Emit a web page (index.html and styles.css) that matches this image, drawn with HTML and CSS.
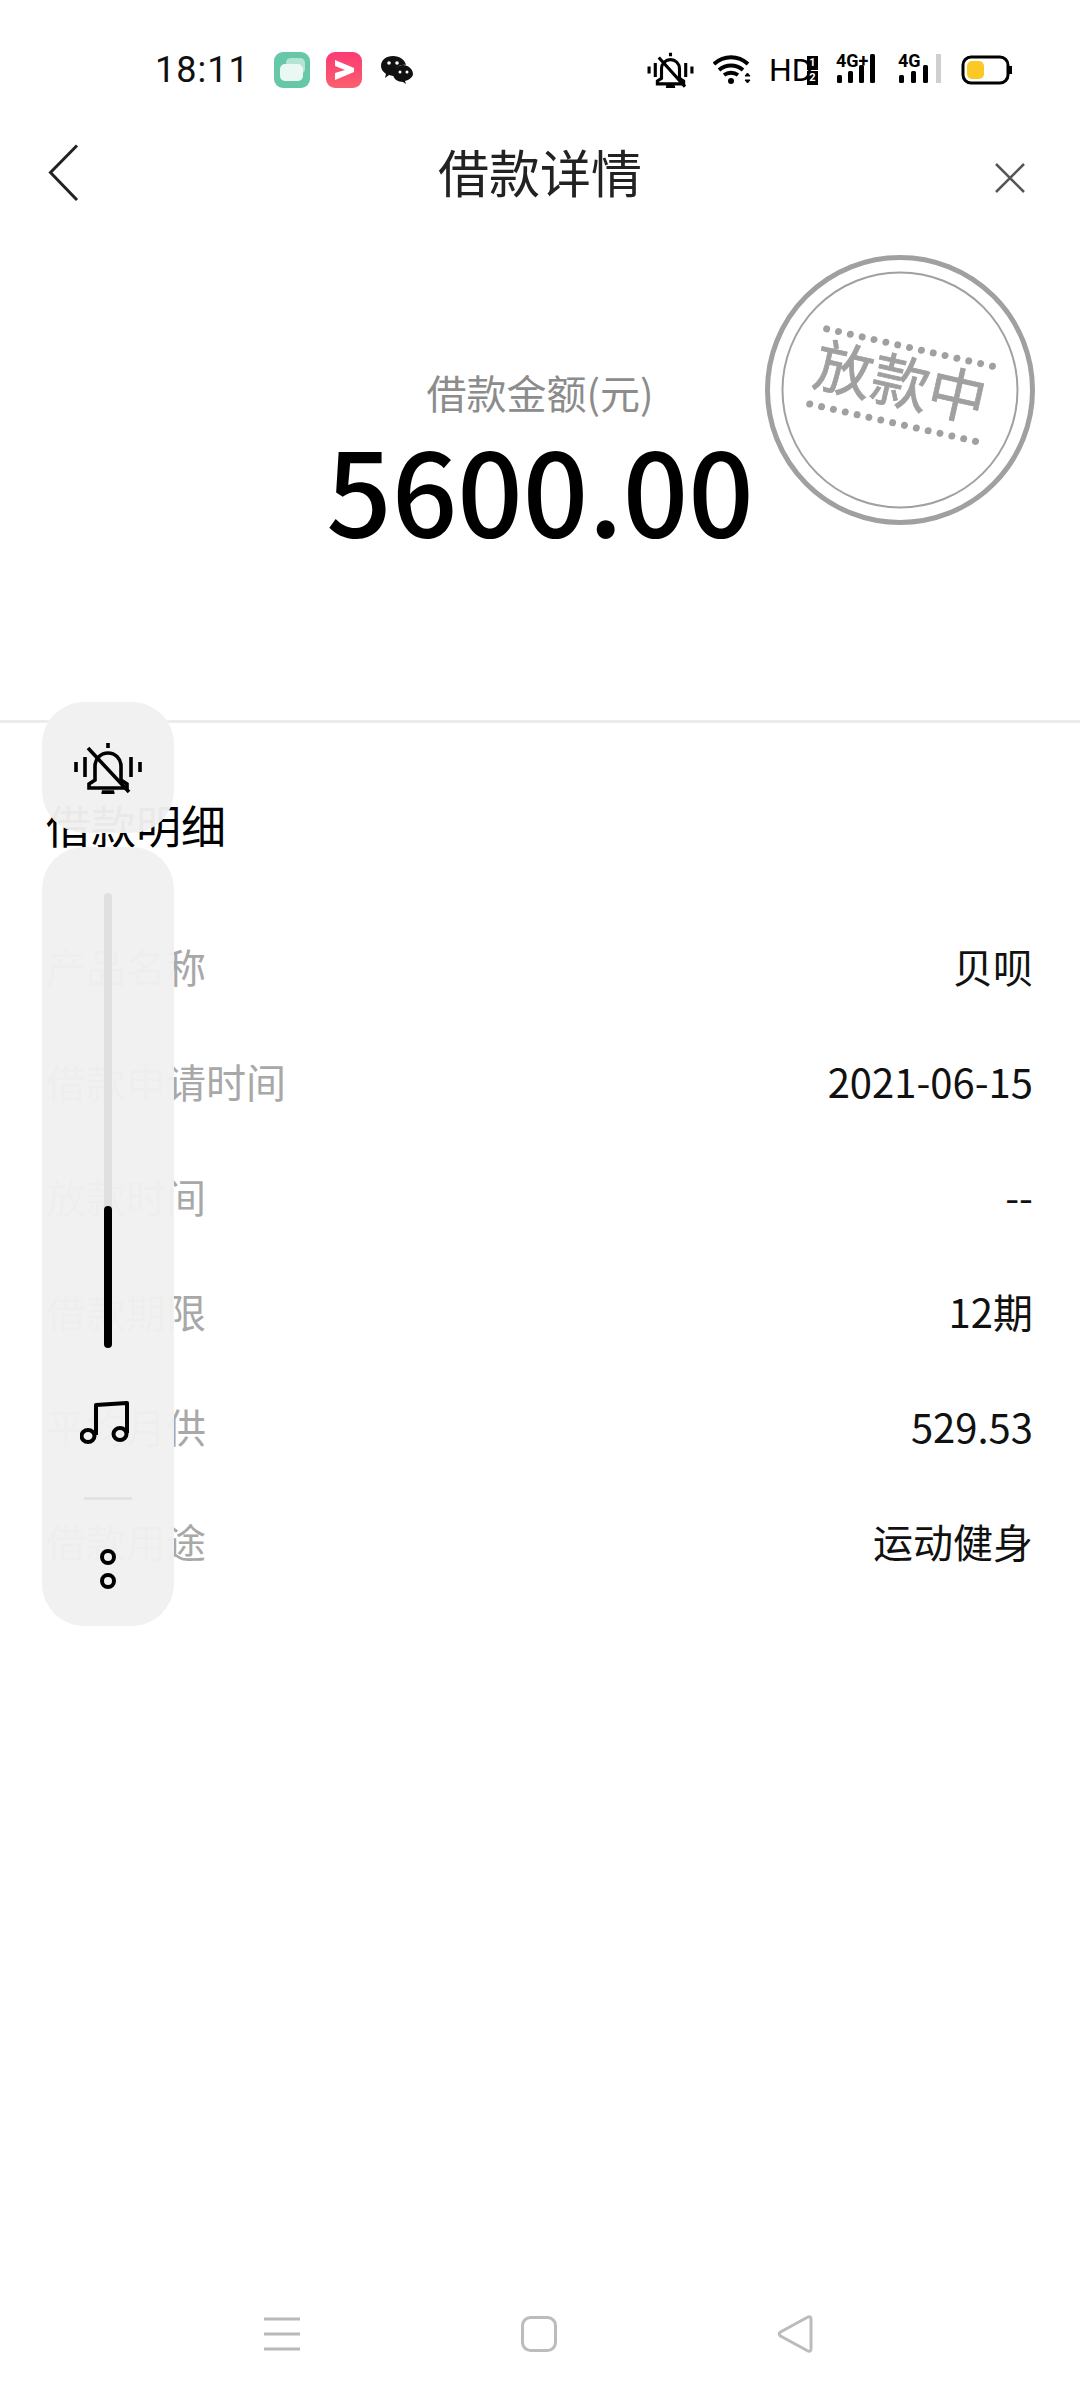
FILE: index.html
```html
<!DOCTYPE html>
<html lang="zh-CN">
<head>
    <meta charset="utf-8">
    <title>借款详情</title>
    <link rel="stylesheet" href="styles.css">
</head>
<body>
<div class="page">
    <div class="status">
        <span class="time">18:11</span>
        <svg class="app-icon" width="36" height="36" viewBox="0 0 36 36">
            <rect width="36" height="36" rx="9" fill="#66c8a9"/>
            <path d="M12 10c0-2 2-4 5-4h9c3 0 5 2 5 5v6c0 2-1 4-3 4V13H12z" fill="#b4e4d3"/>
            <rect x="6" y="12" width="23" height="17" rx="5" fill="#eaf8f3"/>
        </svg>
        <svg class="app-icon" width="36" height="36" viewBox="0 0 36 36">
            <defs><linearGradient id="pink" x1="0" y1="0" x2="0" y2="1"><stop offset="0" stop-color="#fb3a74"/><stop offset="1" stop-color="#fb5f6e"/></linearGradient></defs>
            <rect width="36" height="36" rx="9" fill="url(#pink)"/>
            <path d="M9 8l19 8v4L9 28v-7l10-3-10-4z" fill="#fff"/>
        </svg>
        <svg class="wechat" width="34" height="30" viewBox="0 0 34 30">
            <path d="M13 1C6 1 1 5 1 11c0 3 2 6 5 8l-1 4 4-3c1 0 3 1 4 1h1c-1-7 5-12 12-11C25 5 20 1 13 1z" fill="#111"/>
            <path d="M23 10c-5 0-10 4-10 9s5 8 10 8l3 2-1-3c4-1 8-4 8-7 0-5-5-9-10-9z" fill="#111"/>
            <circle cx="9" cy="8" r="1.8" fill="#fff"/><circle cx="17" cy="8" r="1.8" fill="#fff"/>
            <circle cx="20" cy="17" r="1.5" fill="#fff"/><circle cx="27" cy="17" r="1.5" fill="#fff"/>
        </svg>
        <div class="status-right">
            <svg class="s-bell" width="47" height="36" viewBox="0 0 68 52">
                <path d="M3 21v10M12 16v20M56 16v20M65 21v10" stroke="#000" stroke-width="4.500" fill="none"/>
                <path d="M34 1v5M21 38v-14a13 13 0 0 1 26 0v14l6 4v4H15v-4z" stroke="#000" stroke-width="4.500" fill="none"/>
                <path d="M28 50h12l-6 2.500zM17 8l38 42" stroke="#000" stroke-width="4.500" fill="none"/>
            </svg>
            <svg class="s-wifi" width="38" height="30" viewBox="0 0 38 30">
                <path d="M1 9c10-9 24-9 34 0M6 15c7-6 17-6 24 0M11 20c4-3 10-3 14 0" stroke="#000" stroke-width="3.800" fill="none"/>
                <circle cx="18" cy="26" r="3" fill="#000"/>
                <path d="M32 21l2.500-3 2.500 3zM32 25l2.500 3 2.500-3z" fill="#000" stroke="#000"/>
            </svg>
            <span class="hd">HD</span>
            <div class="hd-sim"><span class="sim-a">1</span><span class="sim-b">2</span></div>
            <svg class="s-sig" width="44" height="40" viewBox="0 0 44 40">
                <text x="0" y="17" class="sig-text">4G+</text>
                <rect x="1" y="25" width="5" height="8" rx="1.500"/><rect x="12" y="21" width="5" height="12" rx="1.500"/><rect x="23" y="15" width="5" height="18" rx="1.500"/><rect x="34" y="4" width="5" height="29" rx="1.500"/>
            </svg>
            <svg class="s-sig s-sig-last" width="44" height="40" viewBox="0 0 44 40">
                <text x="0" y="17" class="sig-text">4G</text>
                <rect x="1" y="25" width="5" height="8" rx="1.500"/><rect x="13" y="21" width="5" height="12" rx="1.500"/><rect x="25" y="15" width="5" height="18" rx="1.500"/><rect x="38" y="4" width="5" height="29" fill="#cfcfcf"/>
            </svg>
            <svg class="s-batt" width="51" height="30" viewBox="0 0 51 30">
                <rect x="2" y="2" width="45" height="26" rx="8" fill="none" stroke="#000" stroke-width="3"/>
                <rect x="6" y="6" width="17" height="18" rx="5" fill="#fbc926"/>
                <path d="M49.500 11v8" stroke="#000" stroke-width="3"/>
            </svg>
        </div>
    </div>

    <div class="topbar">
        <svg class="tb-back" width="32" height="58" viewBox="0 0 32 58"><path d="M29 1.500L2.500 28.500 29 56" fill="none" stroke="#222" stroke-width="3"/></svg>
        <h1 class="title">借款详情</h1>
        <svg class="tb-close" width="32" height="32" viewBox="0 0 32 32"><path d="M2 2l28 28M30 2L2 30" fill="none" stroke="#555" stroke-width="2.500"/></svg>
    </div>

    <div class="summary">
        <p class="amount-label">借款金额(元)</p>
        <p class="amount">5600.00</p>
        <svg class="stamp" width="272" height="272" viewBox="0 0 272 272">
            <circle cx="136" cy="136" r="132.500" fill="none" stroke="#a0a0a0" stroke-width="5"/>
            <circle cx="136" cy="136" r="117.500" fill="none" stroke="#a0a0a0" stroke-width="2"/>
            <g transform="rotate(12.7 136 136)">
                <text x="135" y="150" text-anchor="middle" class="stamp-text">放款中</text>
                <path d="M51 92.500H221M51 169.500H221" fill="none" stroke="#a0a0a0" stroke-width="7" stroke-linecap="round" stroke-dasharray="0 12.14"/>
            </g>
        </svg>
    </div>

    <div class="detail">
        <h2 class="detail-title">借款明细</h2>
        <div class="row"><span class="row-label">产品名称</span><span class="row-value">贝呗</span></div>
        <div class="row"><span class="row-label">借款申请时间</span><span class="row-value">2021-06-15</span></div>
        <div class="row"><span class="row-label">放款时间</span><span class="row-value">--</span></div>
        <div class="row"><span class="row-label">借款期限</span><span class="row-value">12期</span></div>
        <div class="row"><span class="row-label">平均月供</span><span class="row-value">529.53</span></div>
        <div class="row"><span class="row-label">借款用途</span><span class="row-value">运动健身</span></div>
    </div>

    <div class="navbar">
        <svg width="36" height="34" viewBox="0 0 36 34"><path d="M0 2h36M0 17h36M0 32h36" stroke="#b9b9b9" stroke-width="3"/></svg>
        <svg width="36" height="36" viewBox="0 0 36 36"><rect x="1.500" y="1.500" width="33" height="33" rx="8" fill="none" stroke="#bcbcbc" stroke-width="3"/></svg>
        <svg width="37" height="40" viewBox="0 0 37 40"><path d="M30 3.500L3.500 18Q1 20 3.500 22L30 36.500Q34 38.500 34 35V5Q34 1.500 30 3.500z" fill="none" stroke="#bcbcbc" stroke-width="3"/></svg>
    </div>

    <div class="vol-mute">
        <svg width="68" height="52" viewBox="0 0 68 52">
            <path d="M2 20v10M11 15v20M57 15v20M66 20v10" stroke="#000" stroke-width="3.600" fill="none"/>
            <path d="M34 1v5M21 38v-14a13 13 0 0 1 26 0v14l6 4v4H15v-4z" stroke="#000" stroke-width="3.600" fill="none"/>
            <path d="M28 50h12l-6 2.500zM14 6l41 44" stroke="#000" stroke-width="3.600" fill="none"/>
        </svg>
    </div>
    <div class="vol-panel">
        <div class="slider"><div class="slider-fill"></div></div>
        <svg class="music" width="50" height="46" viewBox="0 0 50 46">
            <path d="M16 36V6l31-2v30" fill="none" stroke="#000" stroke-width="4" stroke-linejoin="round"/>
            <ellipse cx="8" cy="37" rx="6.500" ry="6" fill="none" stroke="#000" stroke-width="4"/>
            <ellipse cx="40" cy="35" rx="6.500" ry="6" fill="none" stroke="#000" stroke-width="4"/>
        </svg>
        <div class="vol-line"></div>
        <div class="vol-dot"></div>
        <div class="vol-dot"></div>
    </div>
</div>
</body>
</html>
```

FILE: styles.css
```css
*{
    box-sizing: border-box;
}
body{
    margin: 0;
    background-color: #fff;
    color: #000;
    font-family: "Noto Sans CJK SC", "Noto Sans", sans-serif;
}
p, h1, h2{
    margin: 0;
    font-weight: 400;
}
.page{
    position: relative;
    width: 1080px;
    height: 2400px;
    display: flex;
    flex-direction: column;
    overflow: hidden;
}

/* status bar */
.status{
    height: 138px;
    padding: 52px 68px 0 155px;
    display: flex;
    align-items: flex-start;
}
.time{
    font-family: Roboto, sans-serif;
    font-size: 36px;
    line-height: 36px;
    letter-spacing: 1px;
    width: 119px;
    color: #111;
}
.app-icon{
    margin-right: 16px;
}
.wechat{
    margin: 3px 0 0 2px;
}
.status-right{
    margin-left: auto;
    display: flex;
    align-items: center;
    height: 36px;
}
.s-bell{
    margin-right: 19px;
}
.s-wifi{
    margin-right: 18px;
}
.hd{
    width: 38px;
    font-family: "Liberation Sans Narrow", Roboto, sans-serif;
    font-size: 32px;
    line-height: 36px;
}
.hd-sim{
    width: 11px;
    margin-right: 18px;
    display: flex;
    flex-direction: column;
    gap: 1px;
}
.sim-a, .sim-b{
    height: 14px;
    font: 700 11px/14px Roboto, sans-serif;
    text-align: center;
    color: #fff;
    background-color: #000;
}
.s-sig{
    margin-right: 18px;
}
.s-sig-last{
    margin-right: 19px;
}
.sig-text{
    font: 700 18px "Liberation Sans Narrow", Roboto, sans-serif;
}

/* title */
.topbar{
    height: 68px;
    padding: 0 54px 0 48px;
    display: grid;
    grid-template-columns: 1fr auto 1fr;
    align-items: center;
}
.tb-close{
    justify-self: end;
    margin-top: 11px;
}
.tb-back{
    margin-top: 2px;
}
.title{
    font-size: 51px;
    line-height: 64px;
    color: #222;
    margin: 0 0 2px 6px;
}

/* amount */
.summary{
    position: relative;
    height: 517px;
    border-bottom: 3px solid #ececec;
    padding-top: 160px;
    text-align: center;
}
.amount-label{
    font-size: 40px;
    line-height: 52px;
    color: #8c8c8c;
}
.amount{
    font-size: 115px;
    font-weight: 500;
    line-height: 130px;
    margin-top: 4px;
}
.stamp{
    position: absolute;
    left: 764px;
    top: 48px;
}
.stamp-text{
    font-size: 58px;
    fill: #a0a0a0;
    stroke: #a0a0a0;
    stroke-width: .8px;
    font-family: "Noto Sans CJK SC", sans-serif;
}

/* detail list */
.detail{
    padding: 72px 47px 0 46px;
}
.detail-title{
    font-size: 45px;
    line-height: 60px;
    margin-bottom: 53px;
}
.row{
    height: 115px;
    display: flex;
    align-items: center;
    justify-content: space-between;
    font-size: 40px;
}
.row-label{
    color: #a8a8a8;
}
.row-value{
    color: #111;
}

/* bottom nav */
.navbar{
    margin-top: auto;
    height: 132px;
    padding: 0 266px 0 264px;
    display: flex;
    align-items: center;
    justify-content: space-between;
}

/* volume overlay */
.vol-mute{
    position: absolute;
    left: 42px;
    top: 702px;
    width: 132px;
    height: 131px;
    border-radius: 42px;
    background-color: rgba(241, 241, 241, .97);
    display: flex;
    align-items: center;
    justify-content: center;
}
.vol-panel{
    position: absolute;
    left: 42px;
    top: 847px;
    width: 132px;
    height: 779px;
    border-radius: 42px;
    background-color: rgba(241, 241, 241, .97);
    padding-top: 46px;
    display: flex;
    flex-direction: column;
    align-items: center;
}
.slider{
    width: 8px;
    height: 455px;
    border-radius: 4px;
    background-color: #e0e0e0;
    display: flex;
    align-items: flex-end;
}
.slider-fill{
    width: 8px;
    height: 142px;
    border-radius: 4px;
    background-color: #000;
}
.music{
    margin: 51px 6px 0 0;
}
.vol-line{
    width: 48px;
    height: 3px;
    margin: 52px 0 49px;
    background-color: #e3e3e3;
}
.vol-dot{
    width: 16px;
    height: 16px;
    margin-bottom: 8px;
    border: 4px solid #000;
    border-radius: 50%;
}
```
